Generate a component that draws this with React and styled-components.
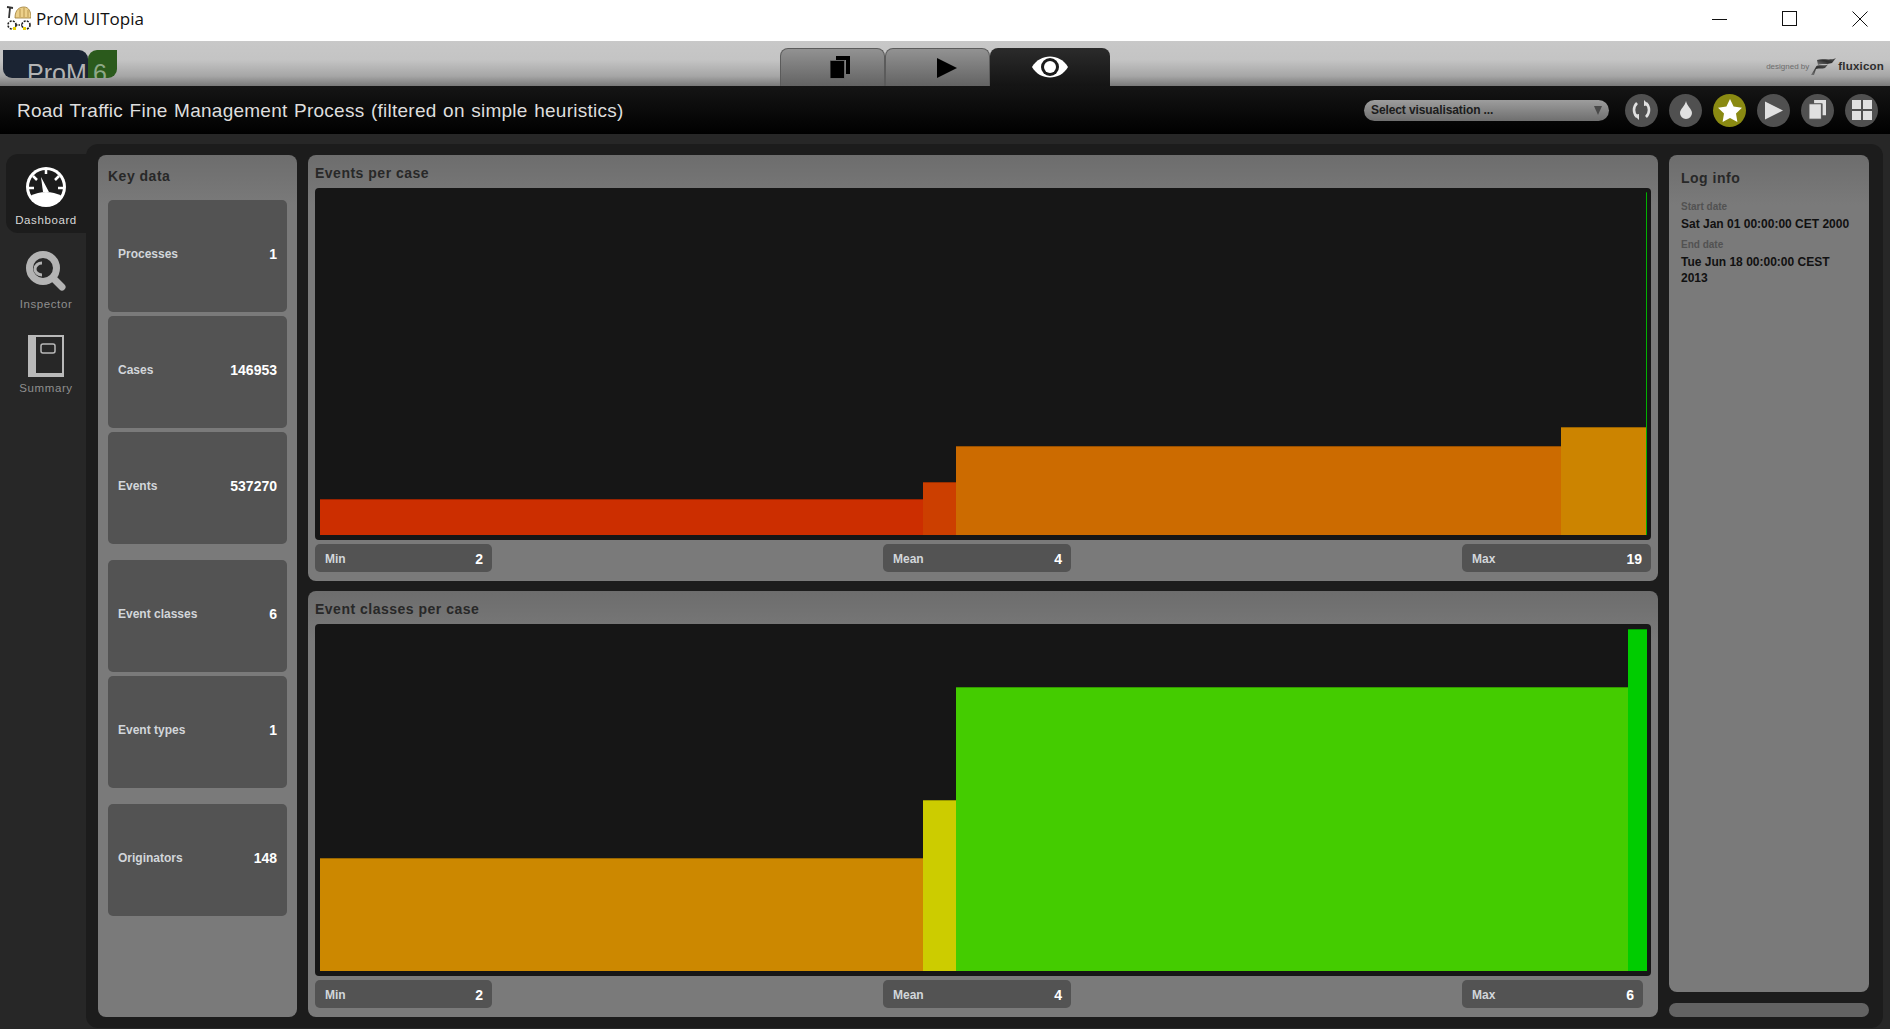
import styled, { createGlobalStyle } from "styled-components";

const GlobalStyle = createGlobalStyle`
  html, body {
    margin: 0;
    padding: 0;
    background: #272727;
    overflow: hidden;
  }
  * {
    box-sizing: border-box;
  }
`;

const Page = styled.div`
  width: 1890px;
  height: 1029px;
  display: flex;
  flex-direction: column;
  font-family: "Liberation Sans", Arial, sans-serif;
  background: #272727;
`;

const TitleBar = styled.div`
  height: 41px;
  flex: none;
  display: flex;
  align-items: center;
  background: #fff;
  padding: 0 0 4px 6px;
`;

const AppName = styled.div`
  margin-left: 5px;
  font-family: "Open Sans", "Noto Sans", sans-serif;
  font-size: 17px;
  color: #111;
`;

const WindowControls = styled.div`
  margin-left: auto;
  display: flex;
  align-items: center;
`;

const WindowButton = styled.div`
  width: 70px;
  height: 37px;
  display: flex;
  align-items: center;
  justify-content: center;
  padding-left: 10px;
`;

const Header = styled.div`
  height: 45px;
  flex: none;
  display: grid;
  grid-template-columns: 1fr auto 1fr;
  background: linear-gradient(#c8c8c8 0%, #c4c4c4 42%, #a6a6a6 78%, #797979 100%);
`;

const Logo = styled.div`
  margin: 9px 0 0 3px;
  width: 114px;
  height: 28px;
  display: flex;
  overflow: hidden;
`;

const LogoMain = styled.div`
  width: 85px;
  background: #1b2433;
  border-radius: 0 9px 0 9px;
  padding: 9px 0 0 24px;
  font-size: 25px;
  line-height: 28px;
  color: #b4b4b4;
`;

const LogoVersion = styled.div`
  width: 29px;
  background: #2b5a1c;
  border-radius: 9px 0 9px 0;
  padding: 9px 0 0 5px;
  font-size: 25px;
  line-height: 28px;
  color: #8fa888;
`;

const Tabs = styled.div`
  display: flex;
  align-self: end;
  height: 38px;
`;

const Tab = styled.div`
  width: ${(p) => p.$width}px;
  display: flex;
  align-items: center;
  justify-content: center;
  padding-left: ${(p) => p.$shift || 0}px;
  border-radius: 8px 8px 0 0;
  border: ${(p) => (p.$active ? "none" : "1px solid #5b5b5b")};
  border-bottom: none;
  background: ${(p) =>
    p.$active
      ? "linear-gradient(#2b2b2b, #141414)"
      : "linear-gradient(#929292, #636363)"};
`;

const Credits = styled.div`
  justify-self: end;
  display: flex;
  align-items: center;
  gap: 2px;
  height: 45px;
  padding: 5px 6px 0 0;
`;

const CreditsSmall = styled.span`
  font-size: 8px;
  color: #6c6c6c;
`;

const CreditsBrand = styled.span`
  font-size: 11.5px;
  font-weight: bold;
  letter-spacing: 0.2px;
  color: #2e2e2e;
`;

const Toolbar = styled.div`
  height: 48px;
  flex: none;
  display: flex;
  align-items: center;
  padding: 0 12px 0 17px;
  background: linear-gradient(#151515, #000);
`;

const DocTitle = styled.div`
  font-size: 19px;
  letter-spacing: 0.25px;
  word-spacing: 1px;
  padding-top: 2px;
  color: #dedede;
`;

const VisSelect = styled.div`
  margin-left: auto;
  width: 245px;
  height: 21px;
  display: flex;
  align-items: center;
  justify-content: space-between;
  padding: 0 7px;
  border-radius: 11px;
  background: linear-gradient(#9d9d9d, #6f6f6f);
  font-size: 12px;
  font-weight: bold;
  letter-spacing: -0.1px;
  color: #1c1c1c;
`;

const SelectArrow = styled.span`
  width: 0;
  height: 0;
  border-left: 4.5px solid transparent;
  border-right: 4.5px solid transparent;
  border-top: 9px solid #4a4a4a;
`;

const RoundButtons = styled.div`
  margin-left: 16px;
  display: flex;
  gap: 11px;
`;

const RoundButton = styled.div`
  width: 33px;
  height: 33px;
  border-radius: 50%;
  display: flex;
  align-items: center;
  justify-content: center;
  background: ${(p) => (p.$active ? "#8a8a12" : "#505050")};
`;

const Body = styled.div`
  flex: 1;
  display: flex;
  min-height: 0;
`;

const Sidebar = styled.div`
  width: 86px;
  flex: none;
  display: flex;
  flex-direction: column;
  gap: 5px;
  padding: 20px 0 0 6px;
`;

const NavItem = styled.div`
  height: 79px;
  display: flex;
  flex-direction: column;
  align-items: center;
  gap: 6px;
  padding-top: 13px;
  border-radius: 12px 0 0 12px;
  background: ${(p) => (p.$active ? "#1c1c1c" : "transparent")};
  color: ${(p) => (p.$active ? "#d8d8d8" : "#8f8f8f")};
  font-size: 11.5px;
  letter-spacing: 0.6px;
`;

const NavIcon = styled.div`
  height: 41px;
  display: flex;
  align-items: flex-start;
`;

const Main = styled.div`
  flex: 1;
  display: flex;
  gap: 10px;
  margin: 10px 7px 1px 0;
  padding: 11px 14px 11px 12px;
  border-radius: 12px;
  background: #1c1c1c;
`;

const Panel = styled.div`
  border-radius: 8px;
  background: linear-gradient(#6d6d6d, #7a7a7a 50px);
`;

const KeyPanel = styled(Panel)`
  width: 199px;
  flex: none;
  display: flex;
  flex-direction: column;
  padding: 0 10px;
`;

const PanelTitle = styled.div`
  font-size: 14px;
  font-weight: bold;
  letter-spacing: 0.5px;
  color: #282828;
`;

const KeyTitle = styled(PanelTitle)`
  height: 45px;
  padding-top: 13px;
`;

const CardGroup = styled.div`
  display: flex;
  flex-direction: column;
  gap: 4px;
  margin-bottom: 16px;
`;

const KeyCard = styled.div`
  height: 112px;
  display: flex;
  align-items: center;
  justify-content: space-between;
  padding: 0 10px 5px;
  border-radius: 5px;
  background: #535353;
`;

const StatLabel = styled.span`
  font-size: 12px;
  font-weight: bold;
  color: #d2d6da;
`;

const StatValue = styled.span`
  font-size: 14px;
  font-weight: bold;
  color: #fff;
`;

const Center = styled.div`
  flex: 1;
  min-width: 0;
  margin: 0 1px;
  display: flex;
  flex-direction: column;
  gap: 10px;
`;

const ChartPanel = styled(Panel)`
  flex: 1;
  display: flex;
  flex-direction: column;
  padding: 0 7px 9px;
`;

const ChartTitle = styled(PanelTitle)`
  height: 33px;
  padding-top: 10px;
`;

const Chart = styled.div`
  flex: 1;
  display: flex;
  align-items: flex-end;
  padding: 0 4px 5px 5px;
  border-radius: 4px;
  background: #161616;
`;

const Bar = styled.div`
  width: ${(p) => p.$width}px;
  height: ${(p) => p.$height}px;
  background: ${(p) => p.$color};
  box-shadow: inset 0 1px rgba(0, 0, 0, 0.25);
`;

const StatRow = styled.div`
  display: grid;
  grid-template-columns: 568px 579px auto;
  margin-top: 4px;
`;

const StatPill = styled.div`
  width: ${(p) => p.$width}px;
  height: 28px;
  display: flex;
  align-items: center;
  justify-content: space-between;
  padding: 1px 9px 0 10px;
  border-radius: 5px;
  background: #535353;
`;

const RightColumn = styled.div`
  width: 200px;
  flex: none;
  display: flex;
  flex-direction: column;
  gap: 11px;
`;

const LogPanel = styled(Panel)`
  flex: 1;
  padding: 0 12px;
`;

const LogTitle = styled(PanelTitle)`
  height: 46px;
  padding-top: 15px;
`;

const LogLabel = styled.div`
  font-size: 10px;
  font-weight: bold;
  color: #525252;
  margin-bottom: 4px;
`;

const LogValue = styled.div`
  font-size: 12px;
  font-weight: bold;
  line-height: 16px;
  color: #111;
  margin-bottom: 7px;
`;

const ScrollTrack = styled.div`
  height: 14px;
  flex: none;
  border-radius: 7px;
  background: #636363;
`;

const WindowIcon = () => (
  <svg width="25" height="25" viewBox="0 0 25 25">
    <path d="M9 12 C9 3 14 1 18 1 C23 1 25 6 25 12 Z" fill="#ecd08a" stroke="#9a7a34" strokeWidth="0.8" />
    <path d="M14 11 L14 3 M18 11 L18 2 M22 11 L22 4" stroke="#b8964e" />
    <path d="M1 1 L7 2 M4 2 L3 12" fill="none" stroke="#333" strokeWidth="1.8" />
    <circle cx="6" cy="19" r="4" fill="#fff" stroke="#222" strokeWidth="1.6" strokeDasharray="2 1.2" />
    <circle cx="20" cy="19" r="4" fill="#fff" stroke="#222" strokeWidth="1.6" strokeDasharray="2 1.2" />
    <path d="M10 19 H16" stroke="#222" strokeWidth="1.4" strokeDasharray="1.5 1" />
    <rect x="7" y="21" width="3" height="3" fill="#e8d000" />
    <rect x="17" y="21" width="3" height="3" fill="#e8d000" />
  </svg>
);

const MinimizeIcon = () => (
  <svg width="16" height="16" viewBox="0 0 16 16">
    <path d="M0 8.5 H15" stroke="#111" />
  </svg>
);

const MaximizeIcon = () => (
  <svg width="16" height="16" viewBox="0 0 16 16">
    <rect x="0.5" y="0.5" width="14" height="14" fill="none" stroke="#111" />
  </svg>
);

const CloseIcon = () => (
  <svg width="16" height="16" viewBox="0 0 16 16">
    <path d="M0.5 0.5 L15.5 15.5 M15.5 0.5 L0.5 15.5" stroke="#111" />
  </svg>
);

const CopiesIcon = ({ color, stroke, size = 20 }) => (
  <svg width={size} height={size * 1.15} viewBox="0 0 20 23">
    <path d="M6 0 H20 V18 H16 V4 H6 Z" fill={color} />
    <rect x="0" y="4.5" width="14.5" height="18" fill={color} stroke={stroke} />
  </svg>
);

const EyeIcon = () => (
  <svg width="36" height="22" viewBox="0 0 36 22">
    <path d="M0 11 C8 -3 28 -3 36 11 C28 25 8 25 0 11 Z" fill="#fff" />
    <circle cx="18" cy="11" r="9" fill="#1a1a1a" />
    <circle cx="18" cy="11" r="6" fill="#fff" />
  </svg>
);

const TriangleIcon = ({ width, height, color }) => (
  <svg width={width} height={height} viewBox="0 0 20 20">
    <path d="M0 0 L20 10 L0 20 Z" fill={color} />
  </svg>
);

const FluxiconMark = () => (
  <svg width="25" height="17" viewBox="0 0 25 17">
    <defs>
      <linearGradient id="fluxWing" x1="0" y1="1" x2="1" y2="0">
        <stop offset="0" stopColor="#777" />
        <stop offset="0.5" stopColor="#2e2e2e" />
        <stop offset="1" stopColor="#555" />
      </linearGradient>
    </defs>
    <path d="M6 2 C12 0 19 3 25 0 L21 5 C15 7 10 5 7 7 Z" fill="url(#fluxWing)" />
    <path d="M5.5 8 C9 6.5 13 8 17 6.5 L14 10 C11 11 8 10 5 11 L3 17 L0 17 Z" fill="url(#fluxWing)" />
  </svg>
);

const RefreshIcon = () => (
  <svg width="19" height="20" viewBox="0 0 19 20" fill="none" stroke="#e0e0e0" strokeWidth="2.6">
    <path d="M5 3 C1 7 1 13 5 17" />
    <path d="M14 3 C18 7 18 13 14 17" />
    <path d="M2 15 L7 20 L7 14 Z M17 5 L12 0 L12 6 Z" fill="#e0e0e0" stroke="none" />
  </svg>
);

const DropIcon = () => (
  <svg width="12" height="18" viewBox="0 0 12 18">
    <path d="M6 0 C7 5 12 8 12 12 A6 6 0 0 1 0 12 C0 8 5 5 6 0 Z" fill="#e0e0e0" />
  </svg>
);

const StarIcon = () => (
  <svg width="24" height="23" viewBox="0 0 24 23">
    <path d="M12 0 L15.6 7.6 L24 8.8 L18 14.6 L19.4 23 L12 19 L4.6 23 L6 14.6 L0 8.8 L8.4 7.6 Z" fill="#fff" />
  </svg>
);

const GridIcon = () => (
  <svg width="20" height="20" viewBox="0 0 20 20" fill="#e0e0e0">
    <rect width="9" height="9" />
    <rect x="11" width="9" height="9" />
    <rect y="11" width="9" height="9" />
    <rect x="11" y="11" width="9" height="9" />
  </svg>
);

const GaugeIcon = () => (
  <svg width="40" height="40" viewBox="0 0 40 40">
    <circle cx="20" cy="20" r="20" fill="#fff" />
    <circle cx="20" cy="20" r="17" fill="#1c1c1c" />
    <path d="M4 29 Q12 25 20 25 Q28 25 36 29 A18 18 0 0 1 4 29 Z" fill="#fff" />
    <path d="M2 21 L8 21 M7 9 L11 13 M20 2 L20 7 M33 9 L29 13 M38 21 L32 21" stroke="#fff" strokeWidth="2.5" />
    <path d="M15 10 L23 25 L17 25 Z" fill="#fff" />
  </svg>
);

const SearchIcon = () => (
  <svg width="40" height="40" viewBox="0 0 40 40" fill="none">
    <circle cx="17" cy="17" r="13.5" stroke="#b3b3b3" strokeWidth="7" />
    <path d="M28 28 L36 36" stroke="#b3b3b3" strokeWidth="7" strokeLinecap="round" />
    <path d="M16 12 A7 6 0 0 0 16 24" stroke="#b3b3b3" strokeWidth="3" />
  </svg>
);

const BookIcon = () => (
  <svg width="36" height="42" viewBox="0 0 36 42">
    <rect width="36" height="42" fill="#b9b9b9" />
    <rect x="8" y="2" width="26" height="36" fill="#272727" />
    <rect x="13" y="9" width="14" height="9" rx="2" fill="none" stroke="#b9b9b9" strokeWidth="1.5" />
  </svg>
);

const keyGroups = [
  [
    ["Processes", "1"],
    ["Cases", "146953"],
    ["Events", "537270"],
  ],
  [
    ["Event classes", "6"],
    ["Event types", "1"],
  ],
  [["Originators", "148"]],
];

const charts = [
  {
    title: "Events per case",
    bars: [
      [603, 36, "#cc2e00"],
      [33, 53, "#cc3f00"],
      [605, 89, "#cc6b00"],
      [85, 108, "#cc8400"],
    ],
    max: "19",
    maxWidth: 189,
    line: true,
  },
  {
    title: "Event classes per case",
    bars: [
      [603, 113, "#cc8800"],
      [33, 171, "#cccc00"],
      [672, 284, "#44cc00"],
      [19, 342, "#00cc00"],
    ],
    max: "6",
    maxWidth: 181,
  },
];

function App() {
  return (
    <Page>
      <GlobalStyle />
      <TitleBar>
        <WindowIcon />
        <AppName>ProM UITopia</AppName>
        <WindowControls>
          <WindowButton><MinimizeIcon /></WindowButton>
          <WindowButton><MaximizeIcon /></WindowButton>
          <WindowButton><CloseIcon /></WindowButton>
        </WindowControls>
      </TitleBar>
      <Header>
        <Logo>
          <LogoMain>ProM</LogoMain>
          <LogoVersion>6</LogoVersion>
        </Logo>
        <Tabs>
          <Tab $width={105} $shift={15}><CopiesIcon color="#000" stroke="#666" /></Tab>
          <Tab $width={105} $shift={18}><TriangleIcon width={20} height={20} color="#000" /></Tab>
          <Tab $width={120} $active><EyeIcon /></Tab>
        </Tabs>
        <Credits>
          <CreditsSmall>designed by</CreditsSmall>
          <FluxiconMark />
          <CreditsBrand>fluxicon</CreditsBrand>
        </Credits>
      </Header>
      <Toolbar>
        <DocTitle>Road Traffic Fine Management Process (filtered on simple heuristics)</DocTitle>
        <VisSelect>
          Select visualisation ...
          <SelectArrow />
        </VisSelect>
        <RoundButtons>
          <RoundButton><RefreshIcon /></RoundButton>
          <RoundButton><DropIcon /></RoundButton>
          <RoundButton $active><StarIcon /></RoundButton>
          <RoundButton><TriangleIcon width={18} height={19} color="#e0e0e0" /></RoundButton>
          <RoundButton><CopiesIcon color="#e0e0e0" stroke="#505050" size={17} /></RoundButton>
          <RoundButton><GridIcon /></RoundButton>
        </RoundButtons>
      </Toolbar>
      <Body>
        <Sidebar>
          <NavItem $active><NavIcon><GaugeIcon /></NavIcon>Dashboard</NavItem>
          <NavItem><NavIcon><SearchIcon /></NavIcon>Inspector</NavItem>
          <NavItem><NavIcon><BookIcon /></NavIcon>Summary</NavItem>
        </Sidebar>
        <Main>
          <KeyPanel>
            <KeyTitle>Key data</KeyTitle>
            {keyGroups.map((group, i) => (
              <CardGroup key={i}>
                {group.map(([label, value]) => (
                  <KeyCard key={label}>
                    <StatLabel>{label}</StatLabel>
                    <StatValue>{value}</StatValue>
                  </KeyCard>
                ))}
              </CardGroup>
            ))}
          </KeyPanel>
          <Center>
            {charts.map((chart) => (
              <ChartPanel key={chart.title}>
                <ChartTitle>{chart.title}</ChartTitle>
                <Chart>
                  {chart.bars.map(([w, h, color]) => (
                    <Bar key={color} $width={w} $height={h} $color={color} />
                  ))}
                  {chart.line && <Bar $width={1} $height={343} $color="#00b000" />}
                </Chart>
                <StatRow>
                  <StatPill $width={177}>
                    <StatLabel>Min</StatLabel>
                    <StatValue>2</StatValue>
                  </StatPill>
                  <StatPill $width={188}>
                    <StatLabel>Mean</StatLabel>
                    <StatValue>4</StatValue>
                  </StatPill>
                  <StatPill $width={chart.maxWidth}>
                    <StatLabel>Max</StatLabel>
                    <StatValue>{chart.max}</StatValue>
                  </StatPill>
                </StatRow>
              </ChartPanel>
            ))}
          </Center>
          <RightColumn>
            <LogPanel>
              <LogTitle>Log info</LogTitle>
              <LogLabel>Start date</LogLabel>
              <LogValue>Sat Jan 01 00:00:00 CET 2000</LogValue>
              <LogLabel>End date</LogLabel>
              <LogValue>Tue Jun 18 00:00:00 CEST 2013</LogValue>
            </LogPanel>
            <ScrollTrack />
          </RightColumn>
        </Main>
      </Body>
    </Page>
  );
}

export default App;
